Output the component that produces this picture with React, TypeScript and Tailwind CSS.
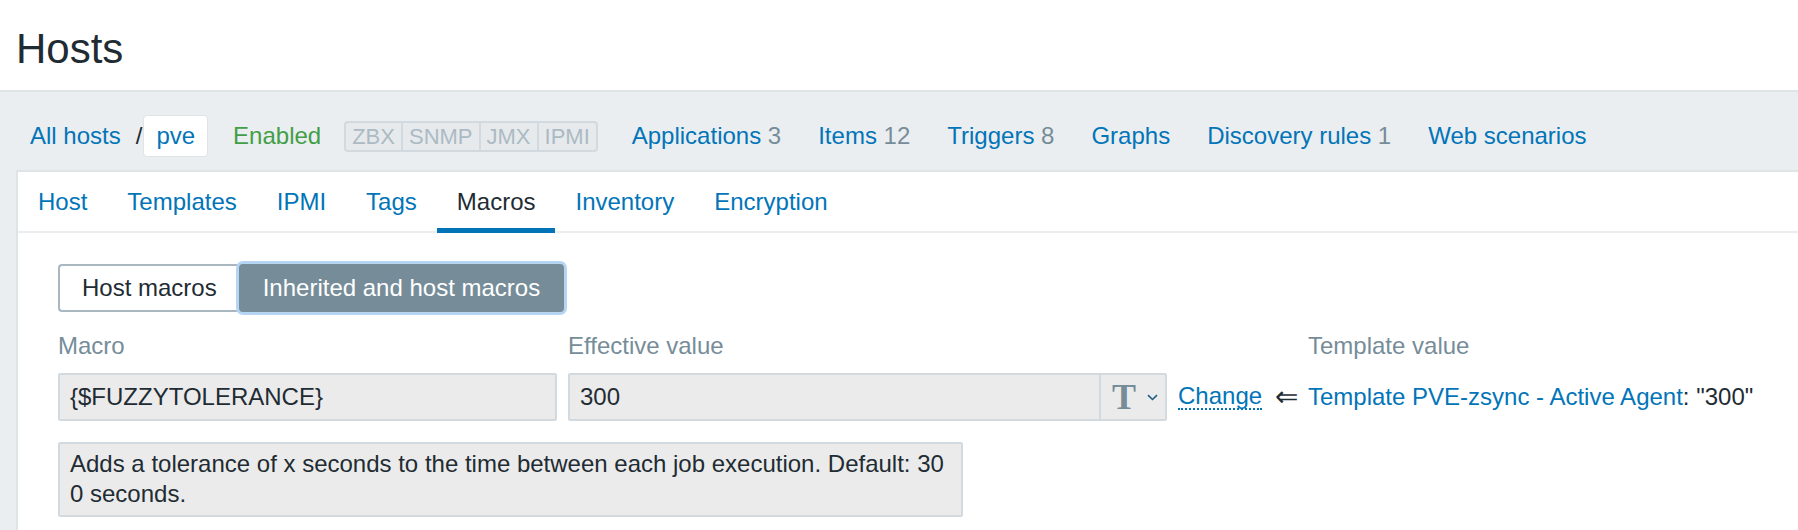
import React from "react";

const navItems: { label: string; count?: string }[] = [
  { label: "Applications", count: "3" },
  { label: "Items", count: "12" },
  { label: "Triggers", count: "8" },
  { label: "Graphs" },
  { label: "Discovery rules", count: "1" },
  { label: "Web scenarios" },
];

const tabs = ["Host", "Templates", "IPMI", "Tags", "Macros", "Inventory", "Encryption"];

const statuses = ["ZBX", "SNMP", "JMX", "IPMI"];

export default function App() {
  return (
    <div className="flex h-[530px] w-full flex-col overflow-hidden bg-white font-['Liberation_Sans',Arial,sans-serif] text-[24px] text-[#1f2c33]">
      {/* Header */}
      <div className="h-[92px] shrink-0 border-b-2 border-[#dfe4e7] bg-white pl-[16px] pt-[28px]">
        <h1 className="text-[42px] leading-[42px] font-normal text-[#1f2c33]">Hosts</h1>
      </div>

      {/* Gray band */}
      <div className="flex flex-1 flex-col bg-[#ebeef0]">
        {/* Breadcrumb / host nav */}
        <div className="mt-[23px] flex h-[42px] items-center pl-[30px] leading-[24px]">
          <span className="text-[#0275b8]">All hosts</span>
          <span className="ml-[15px] text-[#1f2c33]">/</span>
          <span className="ml-[1px] flex h-[42px] items-center rounded-[4px] border border-[#dfe4e7] bg-white px-[12px] text-[#0275b8]">
            pve
          </span>
          <span className="ml-[25px] text-[#429e47]">Enabled</span>
          <div className="ml-[23px] flex h-[31px] items-center rounded-[4px] border-2 border-[#d3dadf] bg-[#e6eaed] text-[22px] leading-[27px] text-[#acbac3]">
            {statuses.map((s, i) => (
              <span
                key={s}
                className={
                  i < statuses.length - 1
                    ? "flex h-full items-center border-r-2 border-[#d3dadf] px-[6px]"
                    : "flex h-full items-center px-[6px]"
                }
              >
                {s}
              </span>
            ))}
          </div>
          <div className="ml-[34px] flex items-center gap-[37px]">
            {navItems.map((n) => (
              <span key={n.label} className="whitespace-nowrap text-[#0275b8]">
                {n.label}
                {n.count && <span className="text-[#768d99]"> {n.count}</span>}
              </span>
            ))}
          </div>
        </div>

        {/* Panel */}
        <div className="ml-[16px] mt-[13px] flex flex-1 flex-col border-l-2 border-t-2 border-[#dfe4e7] bg-white">
          {/* Tabs */}
          <div className="flex h-[61px] border-b-2 border-[#ebeef0]">
            {tabs.map((t) => {
              const active = t === "Macros";
              return (
                <div
                  key={t}
                  className={
                    active
                      ? "relative h-[59px] px-[20px] pt-[18px] leading-[24px] text-[#1f2c33]"
                      : "relative h-[59px] px-[20px] pt-[18px] leading-[24px] text-[#0275b8]"
                  }
                >
                  {t}
                  {active && (
                    <span className="absolute bottom-[-2px] left-0 right-0 h-[5px] bg-[#0275b8]" />
                  )}
                </div>
              );
            })}
          </div>

          {/* Content */}
          <div className="pl-[40px] pt-[31px]">
            {/* Radio toggle */}
            <div className="flex h-[48px] leading-[24px]">
              <div className="flex items-center rounded-l-[4px] border-2 border-r-0 border-[#a9b7c0] bg-white px-[22px] text-[#1f2c33]">
                Host macros
              </div>
              <div className="flex items-center rounded-[4px] border-2 border-[#768d99] bg-[#768d99] px-[22px] text-white shadow-[0_0_0_3px_#b5d5f3]">
                Inherited and host macros
              </div>
            </div>

            {/* Table */}
            <div className="mt-[22px] grid grid-cols-[499px_599px_86px_22px_1fr] gap-x-[11px] leading-[24px]">
              <div className="text-[#768d99]">Macro</div>
              <div className="text-[#768d99]">Effective value</div>
              <div />
              <div />
              <div className="whitespace-nowrap text-[#768d99]">Template value</div>

              <div className="mt-[15px] flex h-[48px] items-center rounded-[2px] border-2 border-[#d3dadf] bg-[#ebebeb] px-[10px]">
                {"{$FUZZYTOLERANCE}"}
              </div>
              <div className="mt-[15px] flex h-[48px] items-stretch rounded-[2px] border-2 border-[#d3dadf] bg-[#ebebeb]">
                <div className="flex flex-1 items-center px-[10px]">300</div>
                <div className="flex w-[66px] items-center border-l-2 border-[#d3dadf] pl-[11px]">
                  <span className="font-['Liberation_Serif',serif] text-[36px] font-bold leading-[36px] text-[#768d99]">T</span>
                  <svg className="ml-[11px]" width="11" height="7" viewBox="0 0 11 7" fill="none">
                    <path d="M1 1.2 L5.5 5.5 L10 1.2" stroke="#1f5f85" strokeWidth="1.6" />
                  </svg>
                </div>
              </div>
              <div className="mt-[15px] flex h-[48px] items-center">
                <span className="inline-block border-b-2 border-dotted border-[#0275b8] leading-[24px] text-[#0275b8]">
                  Change
                </span>
              </div>
              <div className="mt-[15px] flex h-[48px] items-center text-[28px] text-[#1f2c33]">⇐</div>
              <div className="mt-[15px] flex h-[48px] items-center whitespace-nowrap">
                <span className="text-[#0275b8]">Template PVE-zsync - Active Agent</span>
                <span className="text-[#1f2c33]">: "300"</span>
              </div>
            </div>

            {/* Description */}
            <div className="mt-[21px] h-[75px] w-[905px] rounded-[2px] border-2 border-[#d3dadf] bg-[#ebebeb] px-[10px] pt-[5px] leading-[30px] text-[#1f2c33]">
              Adds a tolerance of x seconds to the time between each job execution. Default: 30
              <br />0 seconds.
            </div>
          </div>
        </div>
      </div>
    </div>
  );
}
